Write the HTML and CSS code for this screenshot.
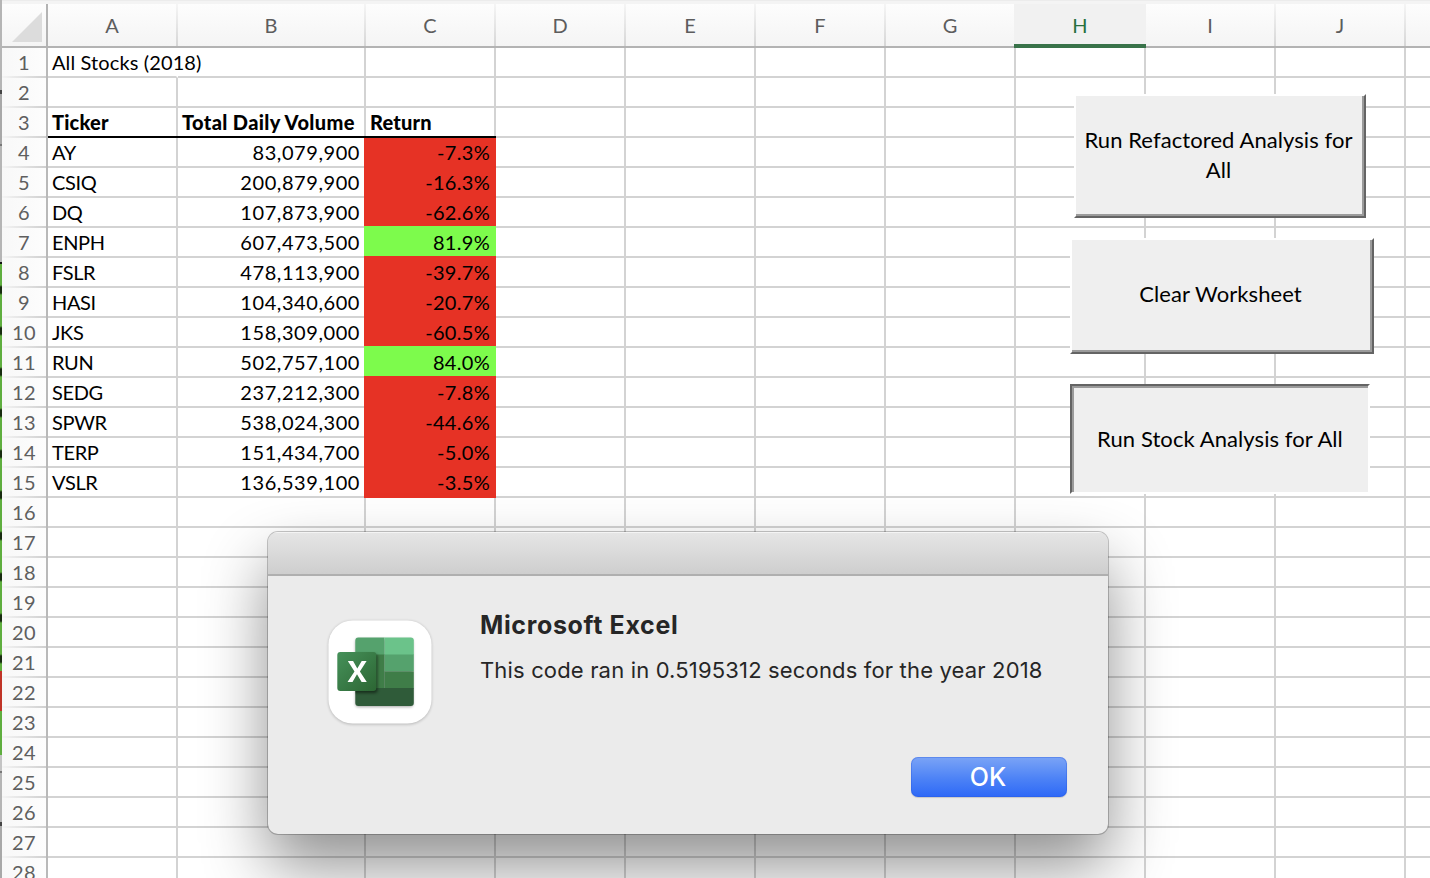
FILE: index.html
```html
<!DOCTYPE html>
<html lang="en">
<head>
<meta charset="utf-8">
<title>All Stocks (2018)</title>
<link rel="stylesheet" href="styles.css">
</head>
<body>
<div class="window">
  <div class="behind"></div>
  <main class="sheet" id="sheet"></main>

  <button class="form-button refactored"><span>Run Refactored Analysis for<br>All</span></button>
  <button class="form-button clear"><span>Clear Worksheet</span></button>
  <button class="form-button pressed"><span>Run Stock Analysis for All</span></button>

  <section class="dialog">
    <div class="titlebar"></div>
    <div class="dialog-body">
      <svg class="app-icon" viewBox="0 0 120 120" width="120" height="120">
        <defs>
          <linearGradient id="tile" x1="0" y1="0" x2="1" y2="1">
            <stop offset="0" stop-color="#46915a"/><stop offset="1" stop-color="#2c6633"/>
          </linearGradient>
          <clipPath id="book"><rect x="35.300" y="27.500" width="58.500" height="68.500" rx="3"/></clipPath>
          <filter id="soft" x="-30%" y="-30%" width="160%" height="160%"><feGaussianBlur stdDeviation="1.6"/></filter>
        </defs>
        <rect x="8.500" y="11" width="103" height="103.500" rx="24" fill="#000" opacity=".22" filter="url(#soft)"/>
        <rect x="8.500" y="10.500" width="103" height="103" rx="24" fill="#fff"/>
        <rect x="35.500" y="29" width="57.500" height="68" rx="3" fill="#000" opacity=".35" filter="url(#soft)"/>
        <g clip-path="url(#book)">
          <rect x="35" y="27" width="29.500" height="18" fill="#55a26d"/>
          <rect x="64.500" y="27" width="30" height="18" fill="#6bc38a"/>
          <rect x="35" y="44.500" width="29.500" height="34" fill="#3f7d48"/>
          <rect x="64.500" y="44.500" width="30" height="17" fill="#55a26d"/>
          <rect x="64.500" y="61.500" width="30" height="17" fill="#3f7d48"/>
          <rect x="35" y="78" width="60" height="18" fill="#2f5b39"/>
          <rect x="19" y="44" width="38.500" height="39" rx="3" fill="#000" opacity=".5" filter="url(#soft)"/>
        </g>
        <rect x="17.300" y="42" width="39" height="39" rx="3" fill="url(#tile)"/>
        <path d="M27.800 51h5.300l4.200 7.600 4.400-7.600h4.900l-6.700 10.500 6.900 10.500h-5.200l-4.600-7.700-4.500 7.700h-5l7-10.500z" fill="#fff"/>
      </svg>
      <div class="message">
        <h1>Microsoft Excel</h1>
        <p>This code ran in 0.5195312 seconds for the year 2018</p>
      </div>
      <button class="ok">OK</button>
    </div>
  </section>
</div>
<script src="sheet.js"></script>
</body>
</html>
```

FILE: styles.css
```css
* { box-sizing: border-box; }
body { margin: 0; background: #fff; }
button { border: 0; padding: 0; margin: 0; }

.window {
  position: relative;
  display: flex;
  width: 1430px;
  height: 878px;
  overflow: hidden;
  font: 20px/28px Lato, "Liberation Sans", sans-serif;
}

/* sliver of the workbook behind this one */
.behind {
  width: 2px;
  background:
    repeating-linear-gradient(transparent 0 21px, rgba(0, 0, 0, .75) 23px 29px, transparent 31px 41px) 0 264px / 2px 408px no-repeat,
    linear-gradient(#b5b5b5 0 90px, #444 90px 94px, #a8a8a8 94px 144px, #777 144px 146px, #b5b5b5 146px 262px, #111 262px 264px, #5fae3f 264px 671px, #c03427 671px 711px, #5fae3f 711px 755px, #c4c4c4 755px 771px, #777 771px 773px, #b5b5b5 773px 822px, #444 822px 826px, #a8a8a8 826px);
}

.sheet {
  flex: 1;
  display: flex;
  flex-direction: column;
  border-top: 1px solid #ececec;
}
.row {
  display: grid;
  flex: none;
  grid-template-columns: 46px 130px 188px repeat(8, 130px) 1fr;
  grid-template-rows: 100%;
  height: 30px;
}
.row > div {
  border-right: 2px solid #d3d3d3;
  border-bottom: 2px solid #d3d3d3;
  padding: 0 4px;
  white-space: nowrap;
  color: #000;
}
.row > div:last-child { border-right: 0; }

.row.columns {
  height: 47px;
  border-top: 3px solid #a2a2a2;
  border-image: linear-gradient(#f4f4f4 0 66%, #a2a2a2 66%) 3;
  border-image-width: 3px 0 0;
  background: linear-gradient(#fdfdfd, #f4f4f4);
}
.row.columns > div {
  padding: 7px 2px 0 0;
  text-align: center;
  color: #5d5d5d;
  border-bottom-color: #b3b3b3;
  border-right: 0;
  background: linear-gradient(#f5f5f5, #d6d6d6) right / 2px 100% no-repeat;
}
.row.columns > .corner {
  display: flex;
  padding: 8px 4px 4px 10px;
  border-right: 2px solid #b3b3b3;
  background: none;
}
.row.columns > div:last-child { background: none; }
.row.columns > .selected {
  margin-left: -2px;
  padding-right: 0;
  border-bottom: 4px solid #39734a;
  background: #f1f1f1;
  color: #28713e;
}

.row > .number {
  padding: 0;
  text-align: center;
  color: #5f5f5f;
  letter-spacing: .5px;
  border-right-color: #b9b9b9;
  border-bottom: 0;
  background:
    linear-gradient(90deg, #f4f4f4, #d0d0d0) bottom / 100% 2px no-repeat,
    linear-gradient(90deg, #f8f8f8, #fdfdfd);
}
.row > .overflowing { border-right-color: transparent; letter-spacing: .12px; }
.row > .ticker { letter-spacing: -.35px; }
.row > .heading { position: relative; z-index: 1; font-weight: 900; letter-spacing: .2px; }
.row > .volume { letter-spacing: .36px; }
.row > .heading::after {
  content: "";
  position: absolute;
  inset: auto -2px -2px 0;
  height: 2px;
  background: #000;
}
.row > .amount { text-align: right; letter-spacing: .56px; }
.row > .return {
  margin: -2px 0 0 -2px;
  padding: 2px 6px 0 0;
  text-align: right;
  letter-spacing: .3px;
  border: 0;
}
.row > .loss { background: #e63225; }
.row > .gain { background: #7dfb4c; }

/* form controls float over the cells */
.form-button {
  position: absolute;
  display: flex;
  align-items: center;
  justify-content: center;
  padding: 0 3px 2px 0;
  background: #efefef;
  border: 2px solid;
  border-color: #fff #646464 #646464 #fff;
  box-shadow: inset -2px -2px #9b9b9b;
  color: #000;
  font: 22px/30px Lato, sans-serif;
  letter-spacing: .08px;
  white-space: nowrap;
}
.refactored { left: 1074px; top: 94px; width: 292px; height: 124px; }
.clear { left: 1070px; top: 238px; width: 304px; height: 116px; padding-bottom: 4px; }
.pressed {
  left: 1070px; top: 384px; width: 300px; height: 110px;
  padding: 0;
  border-color: #646464 #fff #fff #646464;
  box-shadow: inset 2px 2px #9b9b9b;
}

.dialog {
  position: absolute;
  left: 268px;
  top: 532px;
  width: 840px;
  height: 302px;
  border-radius: 10px;
  overflow: hidden;
  background: #ebebeb;
  box-shadow: 0 0 0 1px rgba(0, 0, 0, .22), 0 32px 64px rgba(0, 0, 0, .44);
}
.titlebar {
  height: 44px;
  background: linear-gradient(#e5e5e5, #cecece);
  border-top: 1px solid #f4f4f4;
  border-bottom: 2px solid #afafaf;
}
.dialog-body {
  display: grid;
  grid-template-columns: 120px 1fr;
  grid-template-rows: 147px 40px;
  column-gap: 40px;
  padding: 34px 41px 0 52px;
  font-family: Inter, sans-serif;
  color: #262626;
}
.app-icon { display: block; }
.message h1 { margin: 0; font-size: 25px; line-height: 30px; font-weight: 700; letter-spacing: .65px; }
.message p { margin: 16px 0 0; font-size: 22px; line-height: 28px; letter-spacing: .16px; white-space: nowrap; }
.ok {
  grid-column: 2;
  justify-self: end;
  width: 156px;
  height: 40px;
  padding-right: 2px;
  border-radius: 7px;
  background: linear-gradient(#7ba4f6, #4c82f6 55%, #2d68f7);
  box-shadow: inset 0 0 0 1px rgba(40, 90, 220, .35), 0 1px 1px rgba(0, 0, 0, .15);
  color: #fff;
  font: 500 25px/38px Inter, sans-serif;
}
```

FILE: sheet.js
```js
const stocks = [
  ["AY", "83,079,900", "-7.3%"],
  ["CSIQ", "200,879,900", "-16.3%"],
  ["DQ", "107,873,900", "-62.6%"],
  ["ENPH", "607,473,500", "81.9%"],
  ["FSLR", "478,113,900", "-39.7%"],
  ["HASI", "104,340,600", "-20.7%"],
  ["JKS", "158,309,000", "-60.5%"],
  ["RUN", "502,757,100", "84.0%"],
  ["SEDG", "237,212,300", "-7.8%"],
  ["SPWR", "538,024,300", "-44.6%"],
  ["TERP", "151,434,700", "-5.0%"],
  ["VSLR", "136,539,100", "-3.5%"]
];
const cell = (text = "", cls = "") => `<div class="${cls}">${text}</div>`;
const row = (cells, cls = "") => {
  while (cells.length < 12) cells.push(cell());
  return `<div class="row ${cls}">${cells.join("")}</div>`;
};

const triangle = '<svg width="30" height="30"><path d="M30 0V30H0z" fill="#dcdcdc"/></svg>';
let html = row([cell(triangle, "corner"),
  ..."ABCDEFGHIJ".split("").map(c => cell(c, c === "H" ? "selected" : ""))], "columns");

for (let n = 1; n <= 28; n++) {
  const cells = [cell(n, "number")];
  const stock = stocks[n - 4];
  if (n === 1) cells.push(cell("All Stocks (2018)", "overflowing"));
  if (n === 3) cells.push(cell("Ticker", "heading"), cell("Total Daily Volume", "heading volume"), cell("Return", "heading"));
  if (stock) cells.push(cell(stock[0], "ticker"), cell(stock[1], "amount"),
    cell(stock[2], "return " + (stock[2][0] === "-" ? "loss" : "gain")));
  html += row(cells);
}
document.getElementById("sheet").innerHTML = html;
```
